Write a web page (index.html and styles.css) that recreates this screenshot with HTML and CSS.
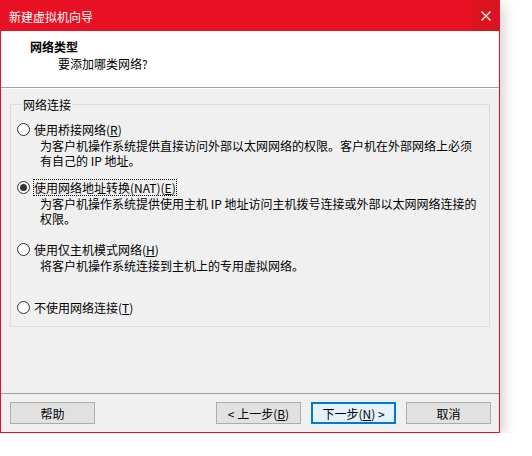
FILE: index.html
```html
<!DOCTYPE html>
<html lang="zh-CN">
<head>
    <meta charset="UTF-8">
    <title>新建虚拟机向导</title>
    <link rel="stylesheet" href="styles.css">
</head>
<body>
    <div class="window">
        <div class="titlebar">
            <span class="title">新建虚拟机向导</span>
            <span class="close">
                <svg width="10" height="10" viewBox="0 0 10 10"><path d="M0.5 0.5L9.5 9.5M9.5 0.5L0.5 9.5" stroke="#fff" stroke-width="1.2"/></svg>
            </span>
        </div>

        <div class="header">
            <div class="header-title">网络类型</div>
            <div class="header-sub">要添加哪类网络?</div>
        </div>

        <div class="content">
            <div class="group">
                <div class="group-label">网络连接</div>

                <div class="option opt-first">
                    <div class="option-row"><span class="radio"></span><span class="option-text">使用桥接网络(<u>R</u>)</span></div>
                    <div class="option-desc">为客户机操作系统提供直接访问外部以太网网络的权限。客户机在外部网络上必须有自己的 IP 地址。</div>
                </div>

                <div class="option opt-nat">
                    <div class="option-row"><span class="radio checked"></span><span class="option-text focused">使用网络地址转换(NAT)(<u>E</u>)</span></div>
                    <div class="option-desc">为客户机操作系统提供使用主机 IP 地址访问主机拨号连接或外部以太网网络连接的权限。</div>
                </div>

                <div class="option opt-host">
                    <div class="option-row"><span class="radio"></span><span class="option-text">使用仅主机模式网络(<u>H</u>)</span></div>
                    <div class="option-desc">将客户机操作系统连接到主机上的专用虚拟网络。</div>
                </div>

                <div class="option opt-none">
                    <div class="option-row"><span class="radio"></span><span class="option-text">不使用网络连接(<u>T</u>)</span></div>
                </div>
            </div>
        </div>

        <div class="footer">
            <button class="btn">帮助</button>
            <div class="nav-buttons">
                <button class="btn">&lt; 上一步(<u>B</u>)</button>
                <button class="btn primary">下一步(<u>N</u>) &gt;</button>
                <button class="btn">取消</button>
            </div>
        </div>
    </div>
</body>
</html>
```

FILE: styles.css
```css
body {
    margin: 0;
    background: #fff;
    font-family: "Noto Sans CJK SC", "Liberation Sans", sans-serif;
    font-size: 12px;
    line-height: 15px;
    color: #000;
}
.window {
    width: 500px;
    height: 433px;
    box-sizing: border-box;
    border: 1px solid #e81123;
    background: #f0f0f0;
    display: flex;
    flex-direction: column;
    box-shadow: 2px 4px 14px rgba(0,0,0,0.22);
}
.titlebar {
    height: 30px;
    background: #e81123;
    color: #fff;
    display: flex;
    align-items: center;
    justify-content: space-between;
    flex-shrink: 0;
}
.title {
    padding-left: 8px;
}
.close {
    width: 27px;
    height: 30px;
    background: #d9141f;
    display: flex;
    align-items: center;
    justify-content: center;
    margin-top: -1px;
}
.header {
    height: 56px;
    background: #fff;
    border-bottom: 1px solid #a0a0a0;
    flex-shrink: 0;
}
.header-title {
    font-weight: bold;
    padding: 8px 0 0 29px;
}
.header-sub {
    padding-left: 57px;
    margin-top: 2px;
}
.content {
    height: 305px;
    padding: 15px 9px 0 9px;
    box-sizing: border-box;
    border-top: 1px solid #fff;
    flex-shrink: 0;
}
.group {
    border: 1px solid #dcdcdc;
    height: 223px;
    box-sizing: border-box;
    padding: 0 6px;
}
.group-label {
    width: fit-content;
    margin-top: -8px;
    margin-left: 5px;
    padding: 0 1px;
    background: #f0f0f0;
}
.option-row {
    display: flex;
    align-items: center;
    gap: 4px;
}
.opt-first {
    margin-top: 10px;
}
.opt-nat {
    margin-top: 12px;
}
.opt-host {
    margin-top: 16px;
}
.opt-none {
    margin-top: 27px;
}
.radio {
    width: 13px;
    height: 13px;
    box-sizing: border-box;
    border: 1px solid #333;
    border-radius: 50%;
    background: #fff;
    display: flex;
    align-items: center;
    justify-content: center;
    flex-shrink: 0;
}
.radio.checked::after {
    content: "";
    width: 7px;
    height: 7px;
    border-radius: 50%;
    background: #333;
}
.focused {
    outline: 1px dotted #000;
}
.option-desc {
    margin-top: 1px;
    padding-left: 23px;
    width: 440px;
}
.footer {
    border-top: 1px solid #a0a0a0;
    padding: 8px 8px 8px 9px;
    display: flex;
    justify-content: space-between;
    flex-shrink: 0;
}
.nav-buttons {
    display: flex;
    gap: 10px;
}
.btn {
    width: 85px;
    height: 22px;
    padding: 0;
    font-family: inherit;
    font-size: 12px;
    color: #000;
    background: #e1e1e1;
    border: 1px solid #adadad;
    box-sizing: border-box;
}
.btn.primary {
    background: #e5f1fb;
    border: 2px solid #0078d7;
}
```
